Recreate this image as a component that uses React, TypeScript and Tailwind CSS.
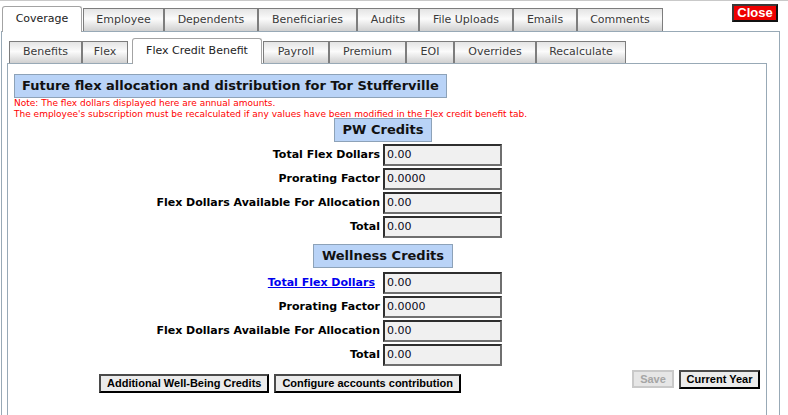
import React from 'react';

const outerTabs = [
  { label: 'Coverage', w: 'w-[80px]', active: true },
  { label: 'Employee', w: 'w-[81px]' },
  { label: 'Dependents', w: 'w-[94px]' },
  { label: 'Beneficiaries', w: 'w-[99px]' },
  { label: 'Audits', w: 'w-[62px]' },
  { label: 'File Uploads', w: 'w-[94px]' },
  { label: 'Emails', w: 'w-[64px]' },
  { label: 'Comments', w: 'w-[86px]' },
];

const innerTabs = [
  { label: 'Benefits', w: 'w-[73px]' },
  { label: 'Flex', w: 'w-[46px]' },
  { label: 'Flex Credit Benefit', w: 'w-[130px]', active: true },
  { label: 'Payroll', w: 'w-[66px]' },
  { label: 'Premium', w: 'w-[77px]' },
  { label: 'EOI', w: 'w-[48px]' },
  { label: 'Overrides', w: 'w-[82px]' },
  { label: 'Recalculate', w: 'w-[90px]' },
];

type TabProps = { label: string; w: string; active?: boolean; inner?: boolean };

const Tab = ({ label, w, active, inner }: TabProps) => {
  if (active) {
    return (
      <div
        className={`${w} ${inner ? 'ml-[4px] mr-[1px]' : 'mr-[1px]'} h-[26px] -mb-px relative z-10 flex items-center justify-center bg-white border border-b-0 border-[#a3a3a3] rounded-t-[3px] text-[11px] text-[#222]`}
      >
        {label}
      </div>
    );
  }
  return (
    <div
      className={`${w} ${inner ? 'h-[22px]' : 'h-[23px]'} flex items-center justify-center border border-b-0 border-[#7d7d7d] bg-[linear-gradient(#e4e4e4,#fbfbfb_45%,#d0d0d0)] text-[11px] text-[#3a3a3a]`}
    >
      {label}
    </div>
  );
};

const Field = ({ value }: { value: string }) => (
  <div className="h-[22px] w-[119px] flex items-center pl-[2px] bg-[#f0f0f0] border-2 border-t-[#2e2e2e] border-l-[#2e2e2e] border-b-[#6f6f6f] border-r-[#6f6f6f] text-[11px] text-[#0a0a1a]">
    {value}
  </div>
);

const SectionTitle = ({ children }: { children: React.ReactNode }) => (
  <div className="flex justify-center pr-[8px]">
    <div className="h-[24px] px-[8px] flex items-center bg-[#b9d3f7] border border-[#8da2b8] text-[13px] font-bold text-[#111]">
      {children}
    </div>
  </div>
);

const CreditTable = ({ link }: { link?: boolean }) => {
  const rows = [
    { label: 'Total Flex Dollars', value: '0.00' },
    { label: 'Prorating Factor', value: '0.0000' },
    { label: 'Flex Dollars Available For Allocation', value: '0.00' },
    { label: 'Total', value: '0.00' },
  ];
  return (
    <div className="ml-[126px] grid grid-cols-[240px_119px] gap-x-[3px] gap-y-[2px] items-center">
      {rows.map((r, i) => (
        <React.Fragment key={r.label}>
          <div className="text-right whitespace-nowrap text-[11px] font-bold text-black">
            {link && i === 0 ? (
              <a href="#" className="text-[#0000ee] underline mr-[5px]">
                {r.label}
              </a>
            ) : (
              r.label
            )}
          </div>
          <Field value={r.value} />
        </React.Fragment>
      ))}
    </div>
  );
};

const btn =
  "shrink-0 whitespace-nowrap h-[19px] px-[6px] flex items-center bg-[#ebebeb] border-2 border-t-[#4a4a4a] border-l-[#4a4a4a] border-b-black border-r-black font-['Liberation_Sans',Arial,sans-serif] font-bold text-[11px] text-black";

export default function App() {
  return (
    <div className="w-[788px] h-[415px] overflow-hidden bg-white border-t border-[#c9c9c9] font-['DejaVu_Sans',Verdana,sans-serif]">
      <div className="flex items-start">
        <div className="h-[30px] flex items-end pl-[2px]">
          {outerTabs.map((t) => (
            <Tab key={t.label} {...t} />
          ))}
        </div>
        <button className="ml-auto mr-[10px] mt-[3px] h-[18px] w-[46px] flex items-center justify-center bg-[#ee0000] border-2 border-t-[#3a3a3a] border-l-[#3a3a3a] border-b-[#111] border-r-[#111] font-['Liberation_Sans',Arial,sans-serif] font-bold text-[13px] text-white">
          Close
        </button>
      </div>

      <div className="ml-[1px] w-[779px] h-[400px] border border-[#98a9b6] pl-[5px] pr-[12px]">
        <div className="h-[31px] flex items-end pl-[2px]">
          {innerTabs.map((t) => (
            <Tab key={t.label} {...t} inner />
          ))}
        </div>

        <div className="h-[360px] border border-[#98a9b6] pl-[6px] pr-[6px] pt-[9px]">
          <div className="inline-flex h-[24px] px-[7px] items-center bg-[#b9d3f7] border border-[#8da2b8] text-[13px] font-bold text-[#111]">
            Future flex allocation and distribution for Tor Stufferville
          </div>
          <div className="text-[9px] leading-[11px] text-[#ff0000]">
            <div>Note: The flex dollars displayed here are annual amounts.</div>
            <div>The employee's subscription must be recalculated if any values have been modified in the Flex credit benefit tab.</div>
          </div>

          <div className="-mt-[2px]">
            <SectionTitle>PW Credits</SectionTitle>
          </div>
          <div className="mt-[2px]">
            <CreditTable />
          </div>

          <div className="mt-[6px]">
            <SectionTitle>Wellness Credits</SectionTitle>
          </div>
          <div className="mt-[4px]">
            <CreditTable link />
          </div>

          <div className="mt-[4px] flex items-start">
            <div className="ml-[85px] mt-[4px] flex gap-[5px]">
              <button className={btn}>Additional Well-Being Credits</button>
              <button className={btn}>Configure accounts contribution</button>
            </div>
            <div className="ml-auto flex gap-[5px]">
              <button
                disabled
                className="shrink-0 h-[18px] w-[42px] flex items-center justify-center bg-[#e6e6e6] border-2 border-[#c9c9c9] font-['Liberation_Sans',Arial,sans-serif] font-bold text-[11px] text-[#a5a5a5]"
              >
                Save
              </button>
              <button className={`${btn} h-[18px] w-[81px] justify-center px-0`}>Current Year</button>
            </div>
          </div>
        </div>
      </div>
    </div>
  );
}
